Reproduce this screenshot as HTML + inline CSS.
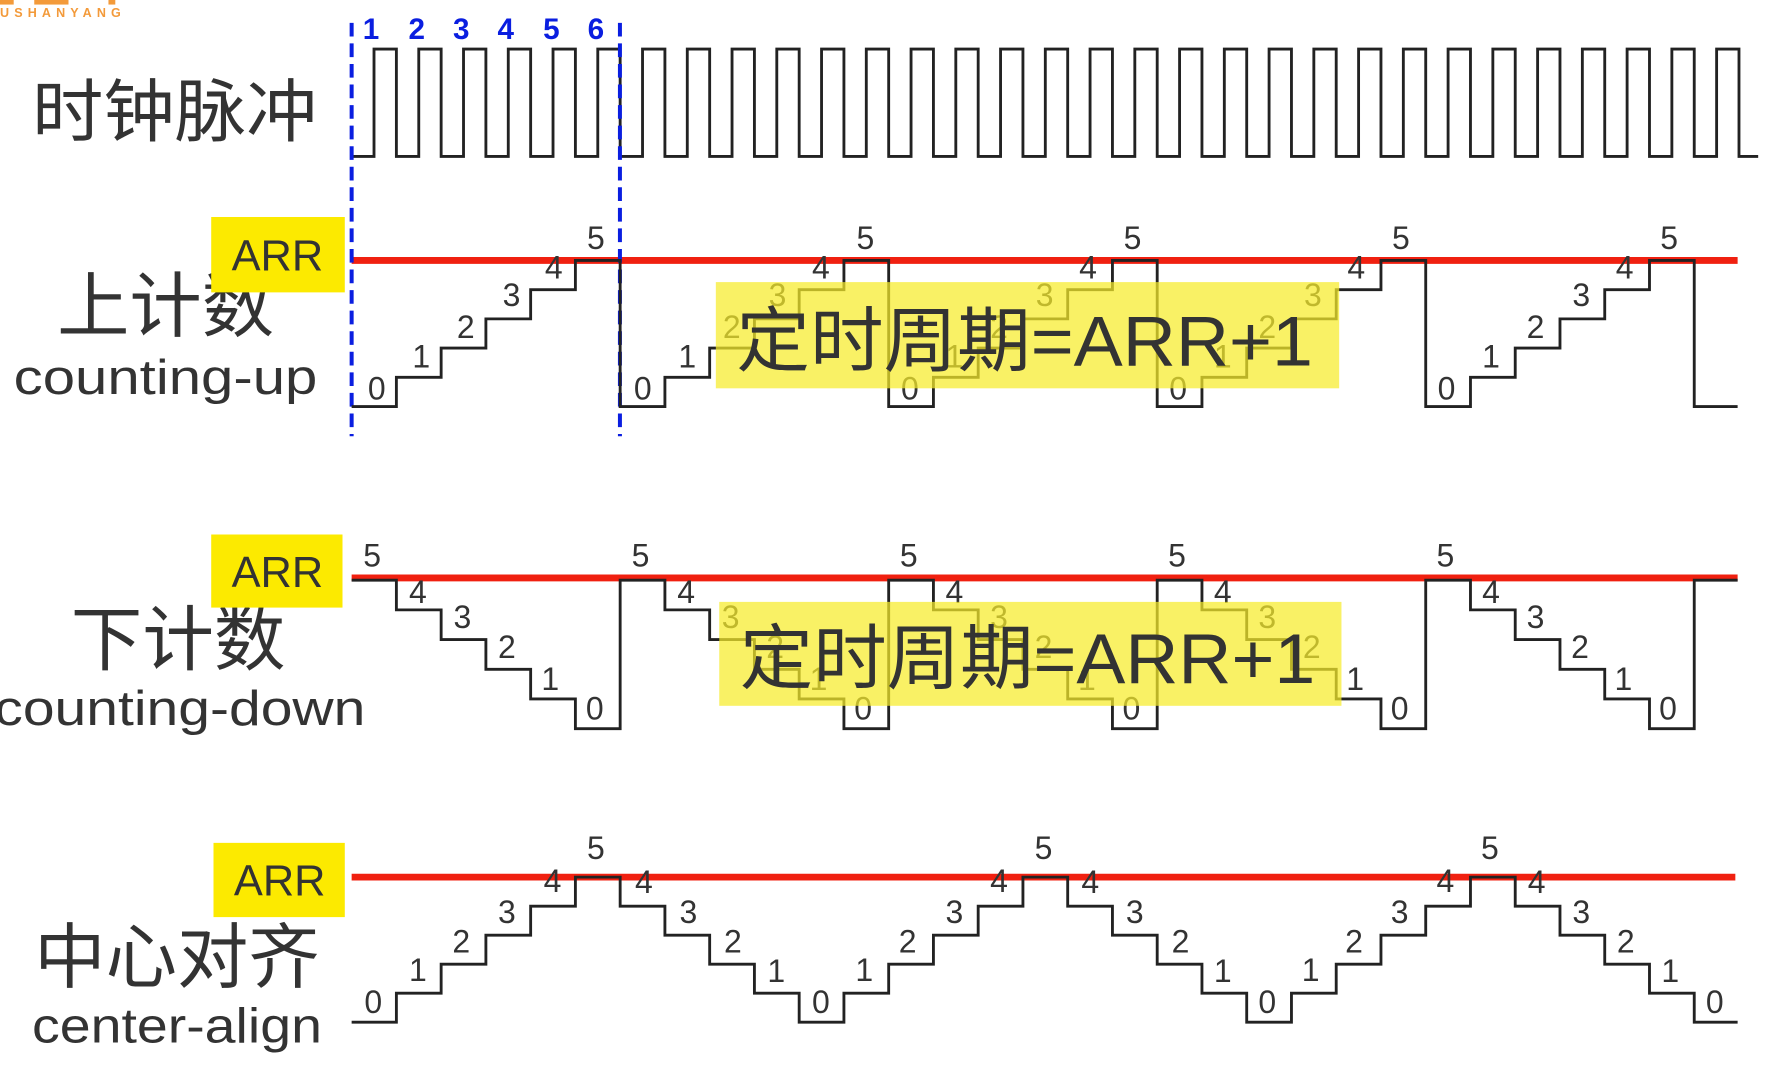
<!DOCTYPE html>
<html><head><meta charset="utf-8"><style>
html,body{margin:0;padding:0;background:#fff;overflow:hidden}
svg{display:block}
.cn{font-family:"Liberation Sans","Noto Sans CJK SC",sans-serif;fill:#333}
.d{font-family:"Liberation Sans","Noto Sans CJK SC",sans-serif;fill:#333;font-size:28px;text-anchor:middle}
.b{font-family:"Liberation Sans",sans-serif;fill:#0a1ee0;font-size:26px;font-weight:bold;text-anchor:middle}
</style></head><body>
<svg width="1789" height="1077" viewBox="0 0 1567 943" preserveAspectRatio="none" xmlns="http://www.w3.org/2000/svg">
<rect width="1567" height="943" fill="#fff"/>
<rect x="0" y="0" width="12" height="4" fill="#f39a3a"/><rect x="30" y="0" width="30" height="4" fill="#f39a3a"/><rect x="95" y="0" width="6" height="4" fill="#f39a3a"/>
<text x="0" y="15" font-family="Liberation Sans,sans-serif" font-size="11" font-weight="bold" fill="#f39a3a" letter-spacing="4.5">USHANYANG</text>

<text class="cn" x="28" y="119" font-size="60" textLength="250" lengthAdjust="spacingAndGlyphs">时钟脉冲</text>
<text class="cn" x="50" y="290" font-size="62" textLength="190" lengthAdjust="spacingAndGlyphs">上计数</text>
<text class="cn" x="12" y="345" font-size="43" textLength="266" lengthAdjust="spacingAndGlyphs">counting-up</text>
<text class="cn" x="62" y="582" font-size="62" textLength="188" lengthAdjust="spacingAndGlyphs">下计数</text>
<text class="cn" x="-5" y="635" font-size="43" textLength="325" lengthAdjust="spacingAndGlyphs">counting-down</text>
<text class="cn" x="30" y="860" font-size="62" textLength="250" lengthAdjust="spacingAndGlyphs">中心对齐</text>
<text class="cn" x="28" y="913" font-size="43" textLength="254" lengthAdjust="spacingAndGlyphs">center-align</text>

<rect x="185" y="190" width="117" height="66" fill="#fcea00"/>
<text class="cn" x="243" y="237" font-size="38" text-anchor="middle">ARR</text>
<rect x="185" y="468" width="115" height="64" fill="#fcea00"/>
<text class="cn" x="243" y="514" font-size="38" text-anchor="middle">ARR</text>
<rect x="187" y="738" width="115" height="65" fill="#fcea00"/>
<text class="cn" x="245" y="784" font-size="38" text-anchor="middle">ARR</text>

<line x1="308" y1="228" x2="1522" y2="228" stroke="#f02010" stroke-width="6"/>
<line x1="308" y1="506" x2="1522" y2="506" stroke="#f02010" stroke-width="6"/>
<line x1="308" y1="768" x2="1520" y2="768" stroke="#f02010" stroke-width="6"/>

<path fill="none" stroke="#222" stroke-width="2.5" d="M308,137
h19.6v-94h19.6v94 h19.6v-94h19.6v94 h19.6v-94h19.6v94 h19.6v-94h19.6v94 h19.6v-94h19.6v94
h19.6v-94h19.6v94 h19.6v-94h19.6v94 h19.6v-94h19.6v94 h19.6v-94h19.6v94 h19.6v-94h19.6v94
h19.6v-94h19.6v94 h19.6v-94h19.6v94 h19.6v-94h19.6v94 h19.6v-94h19.6v94 h19.6v-94h19.6v94
h19.6v-94h19.6v94 h19.6v-94h19.6v94 h19.6v-94h19.6v94 h19.6v-94h19.6v94 h19.6v-94h19.6v94
h19.6v-94h19.6v94 h19.6v-94h19.6v94 h19.6v-94h19.6v94 h19.6v-94h19.6v94 h19.6v-94h19.6v94
h19.6v-94h19.6v94 h19.6v-94h19.6v94 h19.6v-94h19.6v94 h19.6v-94h19.6v94 h19.6v-94h19.6v94
h19.6v-94h19.6v94 H1540"/>

<line x1="308" y1="20" x2="308" y2="382" stroke="#0a1ee0" stroke-width="3.5" stroke-dasharray="12,6"/>
<line x1="543" y1="20" x2="543" y2="382" stroke="#0a1ee0" stroke-width="3.5" stroke-dasharray="12,6"/>
<text class="b" x="325" y="34">1</text><text class="b" x="365" y="34">2</text><text class="b" x="404" y="34">3</text><text class="b" x="443" y="34">4</text><text class="b" x="483" y="34">5</text><text class="b" x="522" y="34">6</text>

<path fill="none" stroke="#222" stroke-width="2.5" d="M308,356 h39.2v-25.6h39.2v-25.6h39.2v-25.6h39.2v-25.6h39.2v-25.6h39.2v128 h39.2v-25.6h39.2v-25.6h39.2v-25.6h39.2v-25.6h39.2v-25.6h39.2v128 h39.2v-25.6h39.2v-25.6h39.2v-25.6h39.2v-25.6h39.2v-25.6h39.2v128 h39.2v-25.6h39.2v-25.6h39.2v-25.6h39.2v-25.6h39.2v-25.6h39.2v128 h39.2v-25.6h39.2v-25.6h39.2v-25.6h39.2v-25.6h39.2v-25.6h39.2v128 h38"/>
<g class="d">
<text x="330" y="350">0</text><text x="369" y="322">1</text><text x="408" y="296">2</text><text x="448" y="268">3</text><text x="485" y="244">4</text><text x="522" y="218">5</text>
<text x="563" y="350">0</text><text x="602" y="322">1</text><text x="641" y="296">2</text><text x="681" y="268">3</text><text x="719" y="244">4</text><text x="758" y="218">5</text>
<text x="797" y="350">0</text><text x="836" y="322">1</text><text x="875" y="296">2</text><text x="915" y="268">3</text><text x="953" y="244">4</text><text x="992" y="218">5</text>
<text x="1032" y="350">0</text><text x="1071" y="322">1</text><text x="1110" y="296">2</text><text x="1150" y="268">3</text><text x="1188" y="244">4</text><text x="1227" y="218">5</text>
<text x="1267" y="350">0</text><text x="1306" y="322">1</text><text x="1345" y="296">2</text><text x="1385" y="268">3</text><text x="1423" y="244">4</text><text x="1462" y="218">5</text>
</g>

<path fill="none" stroke="#222" stroke-width="2.5" d="M308,508 h39.2v26h39.2v26h39.2v26h39.2v26h39.2v26h39.2v-130 h39.2v26h39.2v26h39.2v26h39.2v26h39.2v26h39.2v-130 h39.2v26h39.2v26h39.2v26h39.2v26h39.2v26h39.2v-130 h39.2v26h39.2v26h39.2v26h39.2v26h39.2v26h39.2v-130 h39.2v26h39.2v26h39.2v26h39.2v26h39.2v26h39.2v-130 h38"/>
<g class="d">
<text x="326" y="496">5</text><text x="366" y="528">4</text><text x="405" y="550">3</text><text x="444" y="576">2</text><text x="482" y="604">1</text><text x="521" y="630">0</text>
<text x="561" y="496">5</text><text x="601" y="528">4</text><text x="640" y="550">3</text><text x="679" y="576">2</text><text x="717" y="604">1</text><text x="756" y="630">0</text>
<text x="796" y="496">5</text><text x="836" y="528">4</text><text x="875" y="550">3</text><text x="914" y="576">2</text><text x="952" y="604">1</text><text x="991" y="630">0</text>
<text x="1031" y="496">5</text><text x="1071" y="528">4</text><text x="1110" y="550">3</text><text x="1149" y="576">2</text><text x="1187" y="604">1</text><text x="1226" y="630">0</text>
<text x="1266" y="496">5</text><text x="1306" y="528">4</text><text x="1345" y="550">3</text><text x="1384" y="576">2</text><text x="1422" y="604">1</text><text x="1461" y="630">0</text>
</g>

<path fill="none" stroke="#222" stroke-width="2.5" d="M308,895 h39.2v-25.4h39.2v-25.4h39.2v-25.4h39.2v-25.4h39.2v-25.4 h39.2v25.4h39.2v25.4h39.2v25.4h39.2v25.4h39.2v25.4 h39.2v-25.4h39.2v-25.4h39.2v-25.4h39.2v-25.4h39.2v-25.4 h39.2v25.4h39.2v25.4h39.2v25.4h39.2v25.4h39.2v25.4 h39.2v-25.4h39.2v-25.4h39.2v-25.4h39.2v-25.4h39.2v-25.4 h39.2v25.4h39.2v25.4h39.2v25.4h39.2v25.4h39.2v25.4 h38"/>
<g class="d">
<text x="327" y="887">0</text><text x="366" y="859">1</text><text x="404" y="834">2</text><text x="444" y="808">3</text><text x="484" y="781">4</text><text x="522" y="752">5</text>
<text x="564" y="782">4</text><text x="603" y="808">3</text><text x="642" y="834">2</text><text x="680" y="860">1</text><text x="719" y="887">0</text>
<text x="757" y="859">1</text><text x="795" y="834">2</text><text x="836" y="808">3</text><text x="875" y="781">4</text><text x="914" y="752">5</text>
<text x="955" y="782">4</text><text x="994" y="808">3</text><text x="1034" y="834">2</text><text x="1071" y="860">1</text><text x="1110" y="887">0</text>
<text x="1148" y="859">1</text><text x="1186" y="834">2</text><text x="1226" y="808">3</text><text x="1266" y="781">4</text><text x="1305" y="752">5</text>
<text x="1346" y="782">4</text><text x="1385" y="808">3</text><text x="1424" y="834">2</text><text x="1463" y="860">1</text><text x="1502" y="887">0</text>
</g>

<rect x="627" y="247" width="546" height="93" fill="#f6ec2a" fill-opacity="0.72"/>
<text class="cn" x="645" y="320" font-size="62" fill="#3a3a2a" textLength="505" lengthAdjust="spacingAndGlyphs">定时周期=ARR+1</text>
<rect x="630" y="527" width="545" height="91" fill="#f6ec2a" fill-opacity="0.72"/>
<text class="cn" x="648" y="598" font-size="62" fill="#3a3a2a" textLength="504" lengthAdjust="spacingAndGlyphs">定时周期=ARR+1</text>
</svg>
</body></html>
